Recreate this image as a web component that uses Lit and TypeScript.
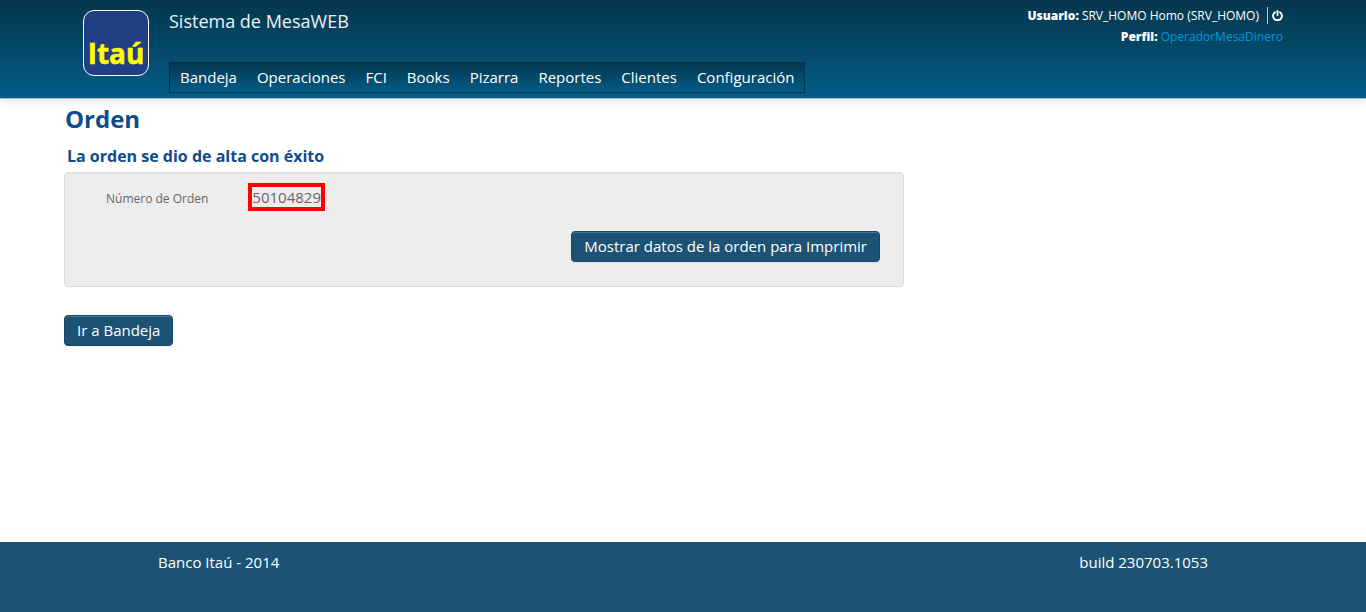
import { LitElement, html, css } from "lit";
import { customElement, property } from "lit/decorators.js";

@customElement("itau-logo")
class ItauLogo extends LitElement {
  static styles = css`
    :host { display: block; }
    svg { display: block; }
    text { font-family: "Open Sans", "Noto Sans", sans-serif; font-size: 28px; font-weight: 700; fill: #ffff00; stroke: #ffff00; stroke-width: 0.5px; }
  `;
  render() {
    return html`<svg width="66" height="66" viewBox="0 0 66 66" role="img" aria-label="Itaú">
      <rect x="0.5" y="0.5" width="65" height="65" rx="10.5" fill="#233f83" stroke="#fff"></rect>
      <text x="33" y="54" text-anchor="middle">Itaú</text>
    </svg>`;
  }
}

@customElement("site-header")
class SiteHeader extends LitElement {
  @property({ type: Array }) items: string[] = [];
  static styles = css`
    :host { display: block; }
    .header {
      background: linear-gradient(#04364c, #045c88) padding-box;
      border-bottom: 1px solid #b5b8ba;
      box-shadow: 0 0 12px rgba(0, 0, 0, 0.15);
      color: #fff;
    }
    .inner {
      display: flex;
      max-width: 1200px;
      margin: 0 auto;
      height: 98px;
      gap: 20px;
    }
    .logo { padding-top: 10px; }
    .center { flex: 1; display: flex; flex-direction: column; align-items: flex-start; justify-content: space-between; padding: 9px 0 5px; }
    .title { margin: 0; font-size: 18px; line-height: 24px; font-weight: 400; color: #ecf2f5; }
    .menu {
      display: flex;
      gap: 20px;
      list-style: none;
      margin: 0;
      padding: 0 10px;
      border: 1px solid #043349;
      background: linear-gradient(#04364c, #045c88);
    }
    .menu a { display: block; color: #fff; text-decoration: none; font-size: 15px; line-height: 29px; }
    .user { padding-top: 5px; font-size: 12px; line-height: 21px; text-align: right; }
    .row { display: flex; justify-content: flex-end; align-items: center; gap: 3px; }
    .row b { font-weight: 800; }
    .logout { display: flex; align-items: center; margin-left: 5px; height: 17px; padding: 0 0 0 4px; border: 0; border-left: 1px solid #b4c4cc; background: none; color: #fff; }
    .profile { color: #0a93d8; text-decoration: none; }
  `;
  render() {
    return html`<header class="header"><div class="inner">
      <itau-logo class="logo"></itau-logo>
      <div class="center">
        <p class="title">Sistema de MesaWEB</p>
        <nav><ul class="menu">${this.items.map((i) => html`<li><a href="#">${i}</a></li>`)}</ul></nav>
      </div>
      <div class="user">
        <div class="row"><b>Usuario:</b><span>SRV_HOMO Homo (SRV_HOMO)</span>
          <button class="logout" aria-label="Salir"><svg width="11" height="11" viewBox="0 0 11 11" fill="none" stroke="currentColor" stroke-width="1.9" stroke-linecap="round"><path d="M3 2.3A4.4 4.4 0 1 0 8 2.3M5.5 1V5"></path></svg></button>
        </div>
        <div class="row"><b>Perfil:</b><a class="profile" href="#">OperadorMesaDinero</a></div>
      </div>
    </div></header>`;
  }
}

@customElement("app-root")
class AppRoot extends LitElement {
  private menu = ["Bandeja", "Operaciones", "FCI", "Books", "Pizarra", "Reportes", "Clientes", "Configuración"];
  static styles = css`
    :host {
      display: flex;
      flex-direction: column;
      min-height: 100vh;
      background: #fff;
      font-family: "Open Sans", "Noto Sans", sans-serif;
      font-size: 15px;
      line-height: 20px;
      color: #666;
    }
    .main { flex: 1; padding: 3px 64px 24px; }
    .heading { margin: 0; padding-left: 1px; font-size: 24px; line-height: 34px; font-weight: 700; color: #0e4c8c; }
    .message { margin: 8px 0 4px; padding-left: 3px; font-size: 16px; line-height: 24px; font-weight: 700; color: #0e4c8c; }
    .panel {
      box-sizing: border-box;
      max-width: 840px;
      padding: 10px 23px 24px;
      border: 1px solid #dcdcdc;
      border-radius: 4px;
      background: #ededed;
      box-shadow: inset 0 1px 1px rgba(0, 0, 0, 0.05);
    }
    .field { display: flex; align-items: baseline; gap: 40px; padding-left: 18px; }
    .label { font-size: 12px; }
    .value { border: 4px solid #f00; }
    .actions { display: flex; justify-content: flex-end; margin-top: 20px; }
    .btn {
      padding: 4px 12px;
      border: 1px solid #19486a;
      border-radius: 4px;
      background: #1c5273;
      color: #fff;
      font: inherit;
      line-height: 21px;
      box-shadow: inset 0 1px 0 rgba(255, 255, 255, 0.2), 0 1px 2px rgba(0, 0, 0, 0.05);
    }
    .back { margin-top: 28px; }
    .footer { background: #1c5273; color: #fff; }
    .footer-inner { display: flex; justify-content: space-between; max-width: 1050px; margin: 0 auto; padding: 10px 0 40px; }
  `;
  render() {
    return html`
      <site-header .items=${this.menu}></site-header>
      <main class="main">
        <h1 class="heading">Orden</h1>
        <h2 class="message">La orden se dio de alta con éxito</h2>
        <section class="panel">
          <div class="field"><label class="label" for="order">Número de Orden</label><output class="value" id="order">50104829</output></div>
          <div class="actions"><button class="btn">Mostrar datos de la orden para Imprimir</button></div>
        </section>
        <button class="btn back">Ir a Bandeja</button>
      </main>
      <footer class="footer"><div class="footer-inner"><span>Banco Itaú - 2014</span><span>build 230703.1053</span></div></footer>
    `;
  }
}
